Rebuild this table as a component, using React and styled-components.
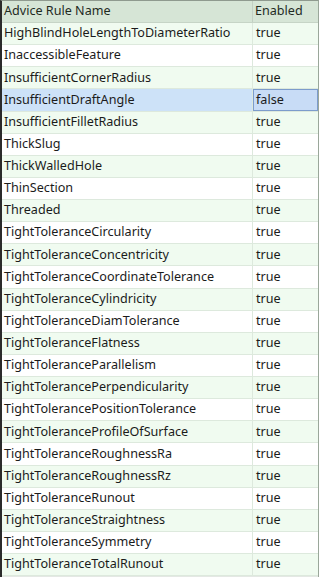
import React from "react";
import styled, { createGlobalStyle } from "styled-components";

const rules = [
  ["HighBlindHoleLengthToDiameterRatio", "true"],
  ["InaccessibleFeature", "true"],
  ["InsufficientCornerRadius", "true"],
  ["InsufficientDraftAngle", "false"],
  ["InsufficientFilletRadius", "true"],
  ["ThickSlug", "true"],
  ["ThickWalledHole", "true"],
  ["ThinSection", "true"],
  ["Threaded", "true"],
  ["TightToleranceCircularity", "true"],
  ["TightToleranceConcentricity", "true"],
  ["TightToleranceCoordinateTolerance", "true"],
  ["TightToleranceCylindricity", "true"],
  ["TightToleranceDiamTolerance", "true"],
  ["TightToleranceFlatness", "true"],
  ["TightToleranceParallelism", "true"],
  ["TightTolerancePerpendicularity", "true"],
  ["TightTolerancePositionTolerance", "true"],
  ["TightToleranceProfileOfSurface", "true"],
  ["TightToleranceRoughnessRa", "true"],
  ["TightToleranceRoughnessRz", "true"],
  ["TightToleranceRunout", "true"],
  ["TightToleranceStraightness", "true"],
  ["TightToleranceSymmetry", "true"],
  ["TightToleranceTotalRunout", "true"],
];

const SELECTED = 3;

const GlobalStyle = createGlobalStyle`
  html, body {
    margin: 0;
    padding: 0;
    background: #ffffff;
  }
  body {
    font-family: "Noto Sans", "Open Sans", sans-serif;
    font-size: 12.6px;
    color: #1b1b1b;
  }
`;

const Grid = styled.div`
  width: 319px;
  height: 577px;
  box-sizing: border-box;
  border-left: 2px solid #2b2b2b;
  border-right: 1px solid #9aa79a;
  border-top: 1px solid #8f9a8f;
  background: #e4e8e4;
  display: flex;
  flex-direction: column;
  overflow: hidden;
`;

const Row = styled.div`
  display: grid;
  grid-template-columns: 251px 1fr;
  height: 22.125px;
  flex: none;
  box-sizing: border-box;
  border-bottom: 1px solid #dde9dd;
  background: ${({ $selected, $alt }) =>
    $selected ? "#cde2f8" : $alt ? "#f0fbf0" : "#ffffff"};
`;

const HeaderRow = styled(Row)`
  height: 22px;
  background: #d6e5d6;
  border-bottom: 1px solid #c6d4c6;
`;

const Cell = styled.div`
  display: flex;
  align-items: center;
  padding-left: 2px;
  box-sizing: border-box;
  white-space: nowrap;
  overflow: hidden;
  border-right: ${({ $last }) => ($last ? "none" : "1px solid #dde9dd")};
  line-height: 1;
`;

const HeaderCell = styled(Cell)`
  border-right: ${({ $last }) => ($last ? "none" : "1px solid #c3d0c3")};
  color: #1f2a1f;
`;

const ValueCell = styled(Cell)`
  padding-left: 3px;
  ${({ $focused }) =>
    $focused &&
    `
    background: #c8dcf6;
    box-shadow: inset 0 0 0 1px #7d9ccc;
  `}
`;

export default function App() {
  return (
    <>
      <GlobalStyle />
      <Grid>
        <HeaderRow>
          <HeaderCell>Advice Rule Name</HeaderCell>
          <HeaderCell $last>Enabled</HeaderCell>
        </HeaderRow>
        {rules.map(([name, enabled], i) => (
          <Row key={name} $alt={i % 2 === 0} $selected={i === SELECTED}>
            <Cell>{name}</Cell>
            <ValueCell $last $focused={i === SELECTED}>
              {enabled}
            </ValueCell>
          </Row>
        ))}
      </Grid>
    </>
  );
}
